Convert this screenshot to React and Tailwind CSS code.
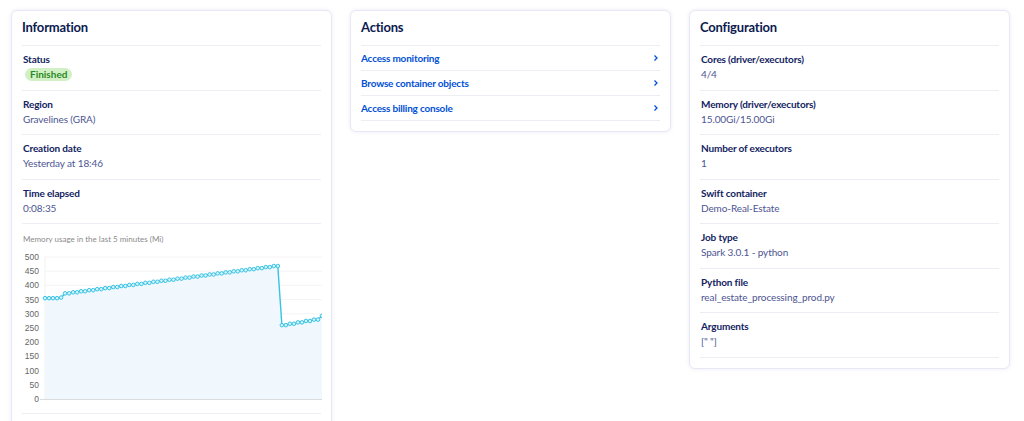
import React from 'react';

const FONT = { fontFamily: 'Lato, "Open Sans", sans-serif' };

const INFO = [
  { label: 'Status', badge: 'Finished' },
  { label: 'Region', value: 'Gravelines (GRA)' },
  { label: 'Creation date', value: 'Yesterday at 18:46' },
  { label: 'Time elapsed', value: '0:08:35' },
];

const ACTIONS = ['Access monitoring', 'Browse container objects', 'Access billing console'];

const CONFIG = [
  { label: 'Cores (driver/executors)', value: '4/4' },
  { label: 'Memory (driver/executors)', value: '15.00Gi/15.00Gi' },
  { label: 'Number of executors', value: '1' },
  { label: 'Swift container', value: 'Demo-Real-Estate' },
  { label: 'Job type', value: 'Spark 3.0.1 - python' },
  { label: 'Python file', value: 'real_estate_processing_prod.py' },
  { label: 'Arguments', value: '[" "]' },
];

// memory samples, roughly what the job reported
const MEMORY = (() => {
  const pts = [];
  for (let i = 0; i < 70; i++) {
    let v;
    if (i < 4) v = 355;
    else if (i === 4) v = 357;
    else if (i <= 58) v = 372 + Math.floor((i - 5) / 2) * 2 * (98 / 53);
    else if (i <= 68) v = 260 + Math.floor((i - 59) / 2) * 2 * (22 / 9);
    else v = 293;
    pts.push(v);
  }
  return pts;
})();

function Card({ title, children }) {
  return (
    <div className="bg-white rounded-[6px] border border-[#e6e8f5] shadow-[0_0_5px_rgba(0,14,156,0.07)] px-[10px] pb-[10px]">
      <div className="h-[34px] flex items-center text-[13px] tracking-[-0.2px] font-bold text-[#0b1a4f]">{title}</div>
      {children}
    </div>
  );
}

function Row({ label, value, badge }) {
  return (
    <div className="border-t border-[#eceef3] pt-[6px] pb-[7.5px] px-[1px]">
      <div className="text-[10px] tracking-[-0.15px] leading-[15px] font-bold text-[#122361]">{label}</div>
      {badge ? (
        <div className="leading-[15px] h-[15px] flex items-center">
          <span className="ml-[2px] rounded-full bg-[#d2f0c6] text-[#2a8a24] font-bold text-[10px] leading-[13px] px-[5px]">{badge}</span>
        </div>
      ) : (
        <div className="text-[10px] tracking-[-0.1px] leading-[15px] text-[#4d5592]">{value}</div>
      )}
    </div>
  );
}

function MemoryChart() {
  const x0 = 23, x1 = 300, yTop = 10, yBot = 152;
  const y = v => yBot - (v / 500) * (yBot - yTop);
  const step = (x1 - x0) / (MEMORY.length - 1);
  const pts = MEMORY.map((v, i) => [x0 + i * step, y(v)]);
  const line = pts.map((p, i) => `${i ? 'L' : 'M'}${p[0].toFixed(1)},${p[1].toFixed(1)}`).join(' ');
  const area = `${line} L${x1},${yBot} L${x0},${yBot} Z`;
  const ticks = [500, 450, 400, 350, 300, 250, 200, 150, 100, 50, 0];
  return (
    <svg width="300" height="160" className="block">
      {ticks.map(t => (
        <g key={t}>
          <line x1={x0} x2={x1} y1={y(t)} y2={y(t)} stroke="#f4f4f6" strokeWidth="1" />
          <text x="17" y={y(t) + 3} textAnchor="end" fontSize="8.5" fill="#666" fontFamily="Liberation Sans, Arial, sans-serif">{t}</text>
        </g>
      ))}
      <line x1={x0} x2={x0} y1={yTop} y2={yBot} stroke="#f2f2f4" />
      <path d={area} fill="#f1f8fd" />
      <line x1="18" x2={x1} y1={yBot + 0.5} y2={yBot + 0.5} stroke="#dcdcdc" />
      <path d={line} fill="none" stroke="#37c3e3" strokeWidth="1.4" />
      {pts.map((p, i) => (
        <circle key={i} cx={p[0]} cy={p[1]} r="1.8" fill="#d6f4fb" stroke="#37c3e3" strokeWidth="1" />
      ))}
    </svg>
  );
}

export default function App() {
  return (
    <div className="bg-white min-h-[421px] pl-[11px] pr-[14px] pt-[10px]" style={FONT}>
      <div className="grid grid-cols-3 gap-[18px] items-start">
        <Card title="Information">
          {INFO.map(r => <Row key={r.label} {...r} />)}
          <div className="border-t border-[#eceef3] pt-[9px]">
            <div className="text-[8px] leading-[12px] text-[#8a8a8a] px-[1px]">Memory usage in the last 5 minutes (Mi)</div>
            <div className="mt-[2px]"><MemoryChart /></div>
          </div>
          <div className="border-t border-[#eceef3] mt-[6px] h-[30px]" />
        </Card>

        <Card title="Actions">
          {ACTIONS.map(a => (
            <div key={a} className="border-t border-[#eceef3] h-[25px] flex items-center justify-between">
              <span className="text-[10px] tracking-[-0.2px] font-bold text-[#0050d7]">{a}</span>
              <svg width="8" height="8" viewBox="0 0 8 8">
                <path d="M2.5 1.5 L5 4 L2.5 6.5" fill="none" stroke="#0050d7" strokeWidth="1.3" />
              </svg>
            </div>
          ))}
          <div className="border-t border-[#eceef3]" />
        </Card>

        <Card title="Configuration">
          {CONFIG.map(r => <Row key={r.label} {...r} />)}
          <div className="border-t border-[#eceef3]" />
        </Card>
      </div>
    </div>
  );
}
